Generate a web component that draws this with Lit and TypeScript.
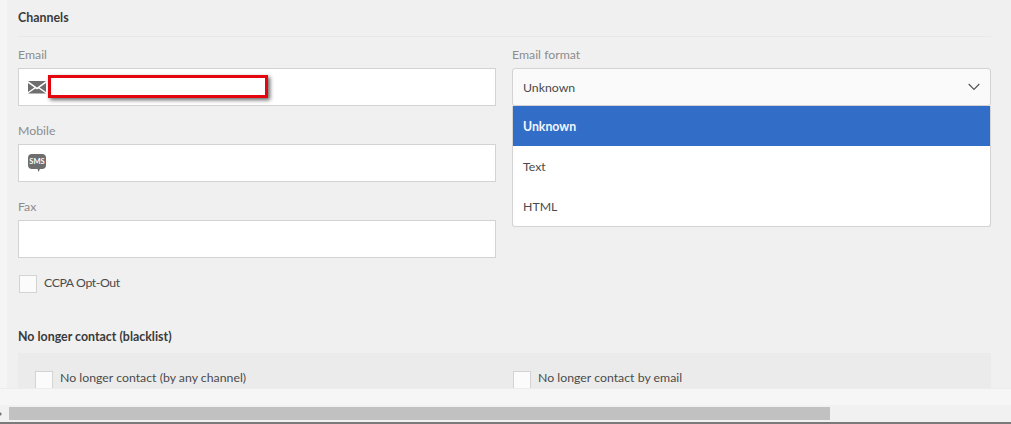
import { css, html, LitElement } from "lit";
import { customElement } from "lit/decorators.js";

@customElement("app-root")
export class AppRoot extends LitElement {
  static override styles = css`
    :host {
      display: block;
      width: 1011px;
      height: 424px;
      overflow: hidden;
      background: #f5f5f5;
      font-family: Lato, "Open Sans", sans-serif;
      font-size: 12.3px;
      color: #4b4b4b;
    }

    .viewport {
      height: 388px;
      margin-left: 7px;
      padding: 0 20px 0 11px;
      background: #f0f0f0;
      overflow: hidden;
      box-sizing: border-box;
    }

    h2 {
      margin: 0;
      font-size: 12.4px;
      line-height: 16px;
      font-weight: 700;
      color: #3a3a3a;
    }

    .section-title {
      padding: 10px 0 10px;
      border-bottom: 1px solid #e8e8e8;
    }

    .columns {
      display: grid;
      grid-template-columns: 478px 479px;
      column-gap: 16px;
      margin-top: 9px;
    }

    .stack {
      display: flex;
      flex-direction: column;
    }

    label.field-label {
      display: block;
      height: 16px;
      line-height: 17px;
      margin-bottom: 6px;
      color: #8c8c8c;
    }

    .field + .field {
      margin-top: 16px;
    }

    .input {
      position: relative;
      display: flex;
      align-items: center;
      height: 38px;
      box-sizing: border-box;
      padding-left: 9px;
      background: #fff;
      border: 1px solid #d3d3d3;
    }

    .input svg {
      display: block;
      width: 18px;
      height: 18px;
    }

    .redaction {
      position: absolute;
      left: 29px;
      top: 6px;
      width: 220px;
      height: 23px;
      box-sizing: border-box;
      background: #fff;
      border: 3px solid #e4060e;
      box-shadow: 2px 2px 4px rgba(0, 0, 0, 0.6);
    }

    .check {
      display: flex;
      align-items: flex-start;
      gap: 7px;
      line-height: 16px;
    }

    .box {
      flex: none;
      width: 18px;
      height: 18px;
      box-sizing: border-box;
      background: #fbfbfb;
      border: 1px solid #d3d3d3;
    }

    .opt-out {
      margin: 17px 0 0 1px;
      letter-spacing: -0.4px;
    }

    .select-wrap {
      position: relative;
    }

    .select {
      display: flex;
      align-items: center;
      justify-content: space-between;
      height: 38px;
      box-sizing: border-box;
      padding: 0 10px;
      background: #fafafa;
      border: 1px solid #d3d3d3;
      border-radius: 3px;
    }

    .select svg {
      display: block;
      width: 12px;
      height: 8px;
    }

    .menu {
      position: absolute;
      left: 0;
      right: 0;
      top: 38px;
      box-sizing: border-box;
      background: #fff;
      border: 1px solid #d3d3d3;
      border-top: none;
      border-radius: 0 0 3px 3px;
      overflow: hidden;
    }

    .option {
      height: 40px;
      line-height: 41px;
      padding: 0 10px;
    }

    .option.selected {
      background: #326ec8;
      color: #f2f6fc;
      font-weight: 700;
    }

    .blacklist-title {
      margin-top: 36px;
    }

    .panel {
      display: grid;
      grid-template-columns: 478px 479px;
      column-gap: 16px;
      margin-top: 8px;
      padding: 18px 0 0 17px;
      height: 60px;
      box-sizing: border-box;
      background: #ebebeb;
    }

    .panel .check {
      line-height: 14px;
    }

    .panel .check:last-child {
      margin-left: -16px;
    }

    .footer-strip {
      height: 16px;
      background: #f6f6f6;
      border-top: 1px solid #ececec;
    }

    .scrollbar {
      position: relative;
      display: flex;
      align-items: center;
      height: 17px;
      padding-left: 9px;
      background: #f1f1f1;
    }

    .arrow {
      position: absolute;
      left: -2px;
      top: 5px;
      border: 4px solid transparent;
      border-left-color: #777;
    }

    .thumb {
      width: 821px;
      height: 13px;
      background: #c1c1c1;
    }

    .under {
      display: flex;
      height: 3px;
      overflow: hidden;
      padding-left: 150px;
      background: #7a7a7a;
      color: #333;
      font-size: 12px;
      line-height: 13px;
      white-space: nowrap;
    }
  `;

  private _envelope() {
    return html`<svg viewBox="0 0 18 18" aria-hidden="true">
      <path fill="#6e6e6e" d="M0 3h18L9 9.6zM0 5l6.4 4.6L0 14zM18 5v9l-6.4-4.4zM7.4 10.4 9 11.6l1.6-1.2L18 15.4H0z" />
    </svg>`;
  }

  private _sms() {
    return html`<svg viewBox="0 0 18 18" aria-hidden="true">
      <path fill="#6e6e6e" d="M4 0h10a4 4 0 0 1 4 4v7a4 4 0 0 1-4 4h-2l-1.5 3-1-3H4a4 4 0 0 1-4-4V4a4 4 0 0 1 4-4z" />
      <text x="9" y="10.2" text-anchor="middle" font-size="7.5" font-weight="700" fill="#fff">SMS</text>
    </svg>`;
  }

  override render() {
    return html`
      <div class="viewport">
        <h2 class="section-title">Channels</h2>
        <div class="columns">
          <div class="stack">
            <div class="field">
              <label class="field-label">Email</label>
              <div class="input">${this._envelope()}<span class="redaction"></span></div>
            </div>
            <div class="field">
              <label class="field-label">Mobile</label>
              <div class="input">${this._sms()}</div>
            </div>
            <div class="field">
              <label class="field-label">Fax</label>
              <div class="input"></div>
            </div>
            <div class="check opt-out"><span class="box"></span>CCPA Opt-Out</div>
          </div>
          <div class="field">
            <label class="field-label">Email format</label>
            <div class="select-wrap">
              <div class="select">
                Unknown
                <svg viewBox="0 0 12 8" aria-hidden="true">
                  <path fill="none" stroke="#555" stroke-width="1.2" d="M.7 1 6 6.4 11.3 1" />
                </svg>
              </div>
              <div class="menu">
                <div class="option selected">Unknown</div>
                <div class="option">Text</div>
                <div class="option">HTML</div>
              </div>
            </div>
          </div>
        </div>
        <h2 class="blacklist-title">No longer contact (blacklist)</h2>
        <div class="panel">
          <div class="check"><span class="box"></span>No longer contact (by any channel)</div>
          <div class="check"><span class="box"></span>No longer contact by email</div>
        </div>
      </div>
      <div class="footer-strip"></div>
      <div class="scrollbar"><span class="arrow"></span><div class="thumb"></div></div>
      <div class="under">01/01/2020 1:20:10 AM</div>
    `;
  }
}
